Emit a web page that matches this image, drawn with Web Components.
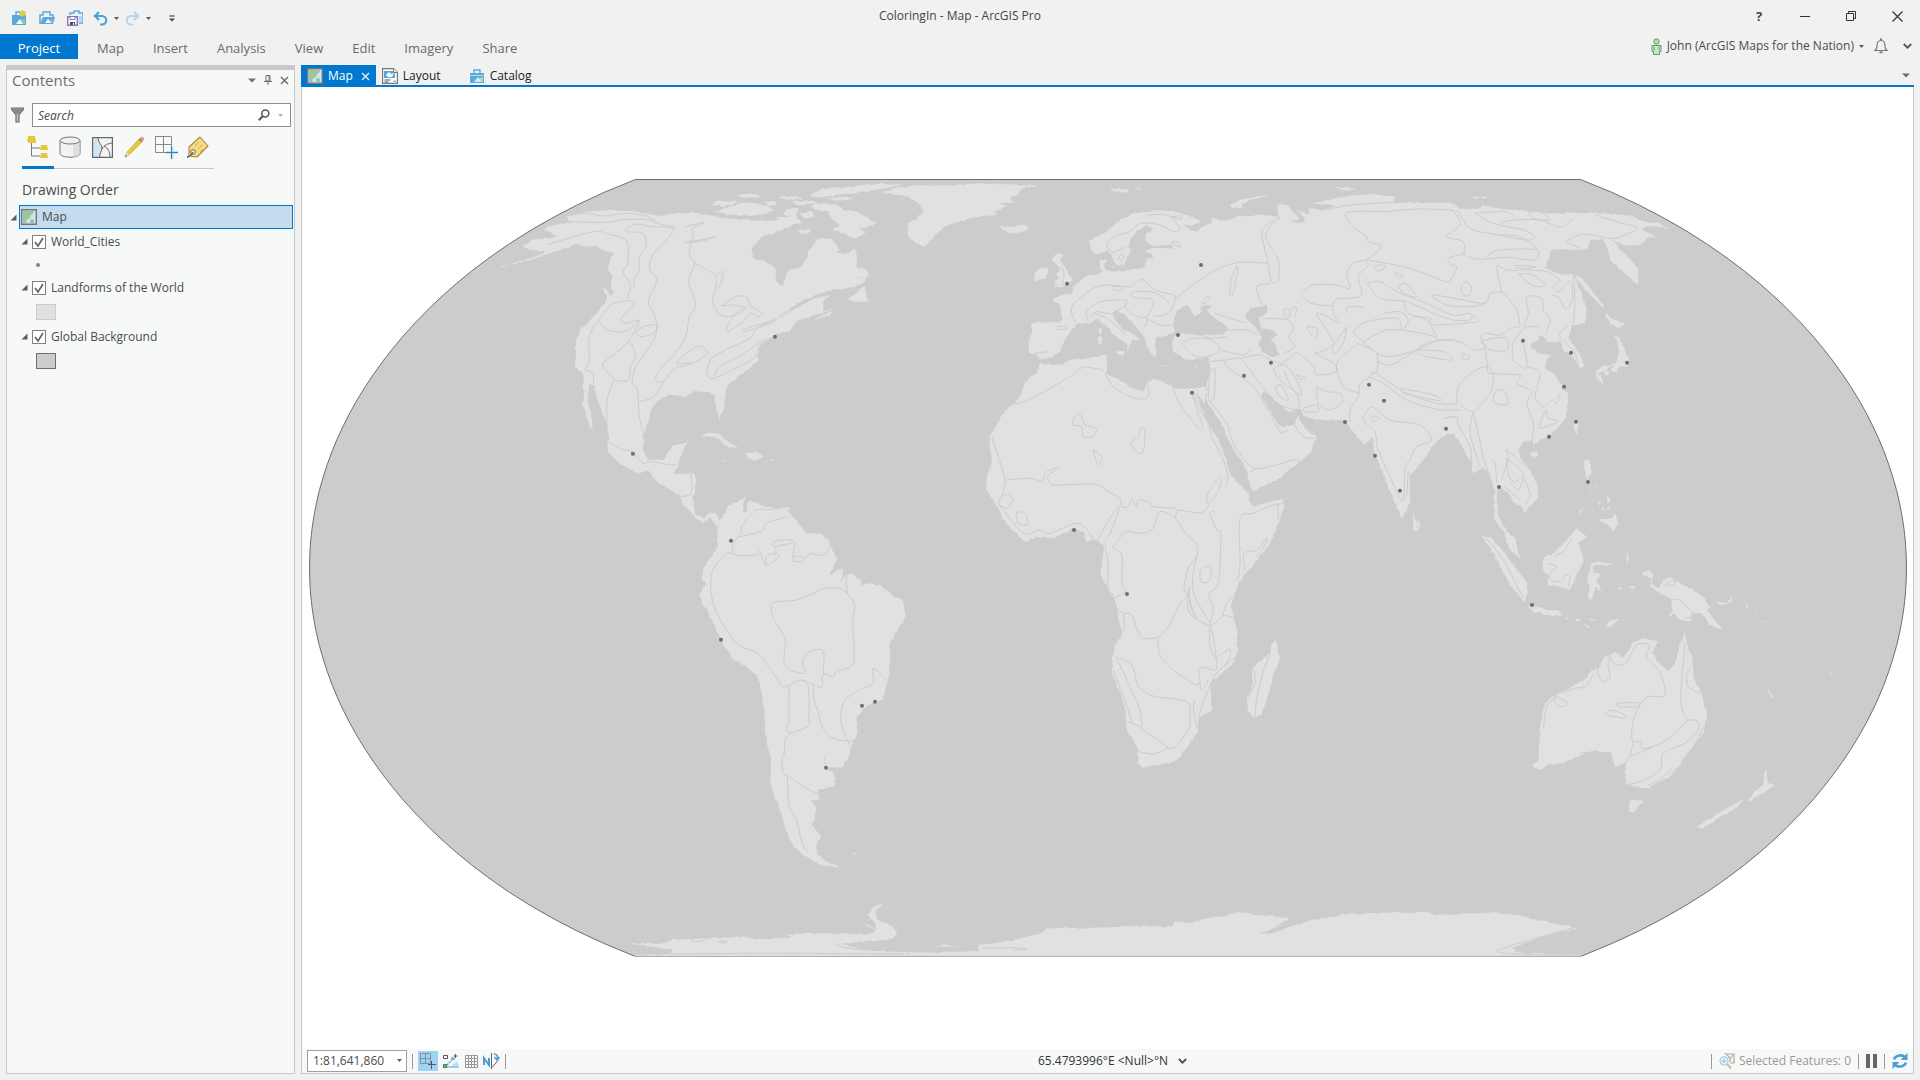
<!DOCTYPE html>
<html lang="en">
<head>
<meta charset="utf-8">
<title>ColoringIn - Map - ArcGIS Pro</title>
<style>
html,body{margin:0;height:100%}
body{font:12px/16px "Open Sans","Noto Sans",sans-serif;color:#4c4c4c;background:#f1f1f1;overflow:hidden}
</style>
</head>
<body>
<app-window>
  <title-bar slot="title"></title-bar>
  <ribbon-bar slot="ribbon"></ribbon-bar>
  <contents-pane slot="side">
    <layer-item name="World_Cities" symbol="point"></layer-item>
    <layer-item name="Landforms of the World" symbol="land"></layer-item>
    <layer-item name="Global Background" symbol="ocean"></layer-item>
  </contents-pane>
  <map-view slot="main"></map-view>
</app-window>
<script>
const FOLDER='<path d="M1 5h14v10H1z" fill="#5aa9dd"/><path d="M5 5V2h6v3" fill="none" stroke="#5aa9dd" stroke-width="1.4"/>';
const ICONS={
 newp:[16,16,FOLDER+'<path d="M5 14l4-5 4 5z" fill="#fff"/><path d="M9 10l5-1v5h-2z" fill="#9cc79a"/><circle cx="11.500" cy="3.500" r="3" fill="#e8cf55"/><circle cx="11.500" cy="3.500" r="1.200" fill="#fff6c8"/><path d="M11.500 0v7M8 3.500h7M9 1l5 5M14 1l-5 5" stroke="#d9bb3a" stroke-width=".7"/>'],
 open:[16,16,'<path d="M1 14V5h3V2h7v3h3v3" fill="none" stroke="#5aa9dd" stroke-width="1.500"/><path d="M1 14L4 7h12l-2 7z" fill="#5aa9dd"/><path d="M6 13l3-4 2 2 2-1-1 3z" fill="#fff"/><path d="M10 11l4-2-1 4z" fill="#9cc79a"/>'],
 save:[16,16,'<path d="M3 5V3h4V1h5v2h4v10h-4" fill="none" stroke="#5aa9dd" stroke-width="1.400"/><path d="M11 6h4v6h-3z" fill="#b5dbf2"/><path d="M.7 6.700h9.600v8.600H.7z" fill="#fff" stroke="#8d74bb" stroke-width="1.400"/><path d="M3 6.500h5v3H3z" fill="#fff" stroke="#8d74bb"/><path d="M3 12h5v3H3z" fill="#4c4c66"/><path d="M6 13h1v2H6z" fill="#fff"/>'],
 undo:[15,15,'<path d="M6 1L2 5l4 4M2 5h7a4 4 0 0 1 0 8.500H7" fill="none" stroke="#4a9fd8" stroke-width="2.200"/>'],
 redo:[15,15,'<path d="M9 1l4 4-4 4M13 5H6a4 4 0 0 0 0 8.500h2" fill="none" stroke="#b3d5ec" stroke-width="2.200"/>'],
 caret:[5,5,'<path d="M0 1h5L2.500 4z" fill="#5c5c5c"/>'],
 caretL:[5,5,'<path d="M0 1h5L2.500 4z" fill="#b5b5b5"/>'],
 caretB:[8,5,'<path d="M0 .5h8L4 4.500z" fill="#6e6e6e"/>'],
 more:[6,7,'<path d="M.5 1h5" stroke="#444" stroke-width="1.200"/><path d="M0 3.500h6L3 6.500z" fill="#444"/>'],
 min:[10,10,'<path d="M0 5.500h10" stroke="#333"/>'],
 restore:[10,10,'<path d="M.5 2.500h7v7h-7zM2.500 2.500v-2h7v7h-2" fill="none" stroke="#333"/>'],
 close:[11,11,'<path d="M.5.5l10 10M10.500.5l-10 10" stroke="#333" stroke-width="1.200"/>'],
 x:[9,9,'<path d="M1 1l7 7M8 1L1 8" stroke="#6e6e6e" stroke-width="1.500"/>'],
 xw:[9,9,'<path d="M1 1l7 7M8 1L1 8" stroke="#e6f2fb" stroke-width="1.300"/>'],
 pin:[8,10,'<path d="M2 .5h4V6H2zM0 6.500h8M4 6.500V10M5 1v5" fill="none" stroke="#6e6e6e"/>'],
 person:[11,17,'<circle cx="5.500" cy="3.500" r="2.700" fill="#b5e0b5" stroke="#5c9f62"/><path d="M1 7.500h9v6H8.500v3h-6v-3H1z" fill="#c8e9c8" stroke="#5c9f62"/><path d="M3 8.500v4M8 8.500v4" stroke="#5c9f62"/>'],
 bell:[14,16,'<path d="M1 12.500c1.500-1 2-2 2-4.500 0-3.500 1-5.500 4-5.500s4 2 4 5.500c0 2.500.5 3.500 2 4.500z" fill="none" stroke="#777" stroke-width="1.200"/><path d="M6 .5h2v2H6zM5.500 13.500h3v1.800h-3z" fill="#777"/>'],
 chev:[9,6,'<path d="M.8 1l3.700 3.700L8.200 1" fill="none" stroke="#555" stroke-width="1.900"/>'],
 map:[16,16,'<path d="M.7.7h14.600v14.600H.7z" fill="#cde6f6" stroke="#777" stroke-width="1.400"/><path d="M2 2h11l-1 3-2 1-1 3-2 1-2 2 1 2H2z" fill="#9cc79a"/><path d="M9 11l2-1 2 1v3H9z" fill="#9cc79a"/>'],
 layout:[16,16,'<path d="M.6.6h11l3.800 3.800v11H.6z" fill="#fff" stroke="#777" stroke-width="1.200"/><path d="M2 3h11v7H2z" fill="#5aa9dd"/><path d="M4 7l3-3 2 2 3-1-2 4H6z" fill="#fff"/><path d="M11.500.6v3.800h3.900" fill="#fff" stroke="#777"/><path d="M2.500 12h6M2.500 14h4" stroke="#555"/><path d="M11 14l2-2 1 2z" fill="#5aa9dd"/>'],
 catalog:[16,16,FOLDER+'<path d="M1 7.500h14" stroke="#b5dbf2"/><path d="M5 14l4-5 5 5z" fill="#d5ebf8"/><path d="M10 10l4-1v5h-2z" fill="#b7d8a4"/>'],
 funnel:[13,16,'<path d="M.7 1h11.600v1.500L8 7.500V15H5V7.500L.7 2.500z" fill="#c8c8c8" stroke="#666" stroke-width="1.200"/><path d="M1 1.500h11L7.500 7h-2z" fill="#888"/>'],
 search:[12,12,'<circle cx="7.300" cy="4.600" r="3.500" fill="none" stroke="#555" stroke-width="1.500"/><path d="M4.700 7.200L.8 11.200" stroke="#555" stroke-width="2"/>'],
 tree:[22,22,'<path d="M4.500 7v13H13M4.500 12H13" fill="none" stroke="#777"/><path d="M1 0h7l1 5H0zM1 5h8v2H1zM14 9h6l1 5h-8zM14 17h6l1 5h-8z" fill="#e2c93f"/>'],
 cyl:[22,22,'<path d="M1 4.500v13c0 2 4.500 3.700 10 3.700s10-1.700 10-3.700v-13" fill="#f2f2f2" stroke="#777"/><path d="M14 8v12.500c4 0 6.500-1.500 6.500-3V5z" fill="#dedede"/><ellipse cx="11" cy="4.500" rx="10" ry="3.500" fill="#f0f0f0" stroke="#777"/>'],
 sel:[21,21,'<path d="M.6.6h19.800v19.800H.6z" fill="#f4f4f4"/><path d="M1 1h5c0 5 4 6 4 10s-3 5-2 9.500H1z" fill="#cfe6f7"/><path d="M.6.6h19.800v19.800H.6z" fill="none" stroke="#666" stroke-width="1.200"/><path d="M6 1c0 5 4 6 4 10s-3 5-2 9.500M10 12c2-4 6-5.500 10.500-6M12 9c4 2 6 6 6 11" fill="none" stroke="#666"/>'],
 pencil:[21,22,'<path d="M1 21l2-5L15 3l3 3L5 19z" fill="#e2c93f" stroke="#b99f28" stroke-width=".6"/><path d="M1 21l2-5 2.500 3z" fill="#efd9a8"/><path d="M15 3l2-2c1-1 4 1 3 3l-2 2z" fill="#e59a86"/><path d="M15 3l3 3" stroke="#888" stroke-width="1.600"/><path d="M1 21l1-2 1 1z" fill="#555"/>'],
 snap:[23,23,'<path d="M.5.5h16v16H.5zM8.500.5v16M.5 8.500h16" fill="none" stroke="#888"/><path d="M17 11v12M11 16.500h12" stroke="#bfe0f5" stroke-width="3"/><path d="M16.500 11v12M11 16.500h12" stroke="#3d7ea8"/>'],
 tag:[22,22,'<path d="M2 11L13 1l8 9L10 21l-8-1z" fill="#f3dc84" stroke="#a8873c" stroke-width="1.100" stroke-linejoin="round"/><path d="M8 10l4-4M11 13l4-4M13 16l3-3" stroke="#c9a955"/><circle cx="6" cy="16" r="2.300" fill="#fff" stroke="#7a5c3a"/><path d="M0 22c0-2 3-1 4-3l2-3" fill="none" stroke="#555" stroke-width="1.300"/>'],
 tri:[7,7,'<path d="M6.500.5v6h-6z" fill="#5c5c5c"/>'],
 snapS:[16,16,'<path d="M.5.5h10v10H.5zM5.500.5v10M.5 5.500h10" fill="none" stroke="#7894a8"/><path d="M11.500 8v8M8 11.500h8" stroke="#555"/>'],
 dyn:[17,16,'<path d="M.5 2.500h4v3h-4zM12.500 1v4M10.500 3h4" fill="none" stroke="#555"/><path d="M4 12L11 5M8 5h3v3" fill="none" stroke="#4a9fd8" stroke-width="1.400" stroke-dasharray="2 1"/><path d="M8 13h8l-2-5z" fill="#bcdff5"/><path d="M2 14h14" stroke="#4a9fd8"/><path d="M.5 11.500h3v3h-3z" fill="#7bb886" stroke="#3f7f4a"/>'],
 grid:[13,13,'<path d="M.5.5h12v12H.5zM3.500.5v12M6.500.5v12M9.500.5v12M.5 3.500h12M.5 6.500h12M.5 9.500h12" fill="none" stroke="#999"/>'],
 north:[17,16,'<path d="M1 12V5l5 7V5" fill="none" stroke="#4a9fd8" stroke-width="2"/><path d="M8.500 0v16M9 14.500l6-7" stroke="#666"/><path d="M11 1c3 0 4 2 3 5M11.500 4l2.500 3 2.500-3" fill="none" stroke="#4a9fd8" stroke-width="1.600"/>'],
 zoomsel:[16,16,'<path d="M5 1h10v9h-4M8 2l3 3v4M14 2l-3 4" fill="none" stroke="#aaa" stroke-width="1.200"/><circle cx="5" cy="8" r="4" fill="#e8f3fa" stroke="#a9cfe8" stroke-width="1.300"/><path d="M5 6v4M3 8h4" stroke="#8fbfe0"/><path d="M8 11l4 4.500" stroke="#e0b890" stroke-width="2.200"/>'],
 pause:[11,14,'<path d="M0 0h4v14H0zM7 0h4v14H7z" fill="#666"/>'],
 refresh:[16,16,'<path d="M2 6.500C3 3 9 .8 13 4M14 9.500C13 13 7 15.200 3 12" fill="none" stroke="#4a9fd8" stroke-width="2.600"/><path d="M15.500 0v7h-7zM.5 16V9h7z" fill="#4a9fd8"/>']
};
const css=(s)=>`<style>:host{box-sizing:border-box}*,*::before{box-sizing:border-box}button{all:unset;box-sizing:border-box;cursor:default;display:inline-flex;align-items:center}${s}</style>`;
const define=(tag,html,setup)=>customElements.define(tag,class extends HTMLElement{
  constructor(){super();this.attachShadow({mode:'open'});}
  connectedCallback(){this.shadowRoot.innerHTML=typeof html==='function'?html(this):html;if(setup)setup(this);}
});

define('ui-icon',el=>{const [w,h,b]=ICONS[el.getAttribute('name')];
  return css(':host{display:inline-flex;flex:none}svg{display:block}')+`<svg width="${w}" height="${h}" viewBox="0 0 ${w} ${h}" aria-hidden="true">${b}</svg>`;});

define('app-window',css(`
:host{display:grid;grid-template-rows:34px 26px minmax(0,1fr);height:100vh;width:100%}
.work{display:flex;gap:6px;padding:5px 6px 6px;min-height:0}
slot[name=main]::slotted(*){flex:1;min-width:0}`)+
`<slot name="title"></slot><slot name="ribbon"></slot><div class="work"><slot name="side"></slot><slot name="main"></slot></div>`);

define('title-bar',css(`
:host{display:grid;grid-template-columns:1fr auto 1fr;align-items:center;padding-bottom:2px}
.quick{display:flex;align-items:center;gap:12px;padding:4px 0 0 11px}
.quick .split{display:flex;gap:6px;margin-left:-2px}
.quick .split+.split{margin-left:-6px}
.quick .last{margin-left:6px}
h1{margin:0;font:12px/16px "Open Sans",sans-serif;color:#444}
.win{display:flex;justify-content:flex-end}
.win button{width:46px;height:28px;justify-content:center;font-weight:700;font-size:13px;color:#444}`)+
`<div class="quick"><button aria-label="New project"><ui-icon name="newp"></ui-icon></button><button aria-label="Open project"><ui-icon name="open"></ui-icon></button><button aria-label="Save project"><ui-icon name="save"></ui-icon></button>
<button class="split" aria-label="Undo"><ui-icon name="undo"></ui-icon><ui-icon name="caret"></ui-icon></button><button class="split" aria-label="Redo"><ui-icon name="redo"></ui-icon><ui-icon name="caret"></ui-icon></button>
<button class="last" aria-label="Customize"><ui-icon name="more"></ui-icon></button></div>
<h1>ColoringIn - Map - ArcGIS Pro</h1>
<div class="win"><button>?</button><button aria-label="Minimize"><ui-icon name="min"></ui-icon></button><button aria-label="Restore"><ui-icon name="restore"></ui-icon></button><button aria-label="Close"><ui-icon name="close"></ui-icon></button></div>`);

define('ribbon-bar',css(`
:host{display:flex;align-items:stretch;justify-content:space-between}
nav{display:flex;height:25px;padding-right:8px}
nav button{padding:2px 14px 0 15px;font-size:13px;color:#6a6a6a}
nav .on{background:#0078d0;color:#fff;width:78px;justify-content:center;padding:2px 0 0;margin-right:4px}
.user{display:flex;align-items:center;gap:12px;padding:0 8px 2px 0}
.user button{gap:5px}
.user .name{margin-right:-2px}
.user .chev{margin-left:3px}`)+
`<nav><button class="on">Project</button><button>Map</button><button>Insert</button><button>Analysis</button><button>View</button><button>Edit</button><button>Imagery</button><button>Share</button></nav>
<div class="user"><button class="name"><ui-icon name="person"></ui-icon><span>John (ArcGIS Maps for the Nation)</span><ui-icon name="caret"></ui-icon></button><button aria-label="Notifications"><ui-icon name="bell"></ui-icon></button><button class="chev" aria-label="Collapse ribbon"><ui-icon name="chev"></ui-icon></button></div>`);

define('contents-pane',css(`
:host{display:flex;flex-direction:column;width:289px;flex:none;background:#f7f9f8;border:1px solid #c8c8c8;border-top:5px solid #c8c8c8}
header{display:flex;align-items:center;height:20px;padding:0 5px;gap:8px}
h2{margin:0;flex:1;font:15px/20px "Open Sans",sans-serif;color:#6e6e6e}
.find{display:flex;align-items:center;gap:8px;padding:13px 3px 0 4px}
.box{display:flex;flex:1;height:24px;border:1px solid #8e8e8e;background:#fff;align-items:center;padding:0 7px 0 5px;gap:8px}
input{border:0;outline:0;padding:1px 0 0;margin:0;flex:1;min-width:0;font:italic 12px/16px "Open Sans",sans-serif;background:none;color:#4c4c4c}
input::placeholder{color:#4c4c4c;opacity:1}
.tools{display:flex;width:192px;margin:7px 0 0 15px;border-bottom:1px solid #c8c8c8;height:35px}
.tools button{width:32px;height:35px;justify-content:center;border-bottom:3px solid transparent;padding-bottom:6px}
.tools .on{border-bottom-color:#0078d0}
h3{margin:12px 0 6px 15px;font:500 14px/18px "Open Sans",sans-serif;color:#4c4c4c}
.root{display:flex;align-items:center;gap:2px;padding:0 1px 0 3px}
.root div{display:flex;flex:1;align-items:center;gap:5px;height:24px;background:#c5dbef;border:1px solid #0078c8;padding-left:1px}`)+
`<header><h2>Contents</h2><button aria-label="Options"><ui-icon name="caretB"></ui-icon></button><button aria-label="Pin"><ui-icon name="pin"></ui-icon></button><button aria-label="Close"><ui-icon name="x"></ui-icon></button></header>
<div class="find"><ui-icon name="funnel"></ui-icon><div class="box"><input type="text" placeholder="Search" aria-label="Search"><ui-icon name="search"></ui-icon><ui-icon name="caretL"></ui-icon></div></div>
<div class="tools"><button class="on" aria-label="Drawing order"><ui-icon name="tree"></ui-icon></button><button aria-label="Data source"><ui-icon name="cyl"></ui-icon></button><button aria-label="Selection"><ui-icon name="sel"></ui-icon></button><button aria-label="Editing"><ui-icon name="pencil"></ui-icon></button><button aria-label="Snapping"><ui-icon name="snap"></ui-icon></button><button aria-label="Labeling"><ui-icon name="tag"></ui-icon></button></div>
<h3>Drawing Order</h3><div class="root"><ui-icon name="tri"></ui-icon><div><ui-icon name="map"></ui-icon><span>Map</span></div></div><slot></slot>`);

define('layer-item',el=>{const s=el.getAttribute('symbol');return css(`
:host{display:block;padding-left:14px}
.row{display:flex;align-items:center;height:25px;gap:4px}
label{display:flex;align-items:center;gap:5px}
input{appearance:none;margin:0;width:14px;height:14px;border:1px solid #808080;background:#fff url("data:image/svg+xml,%3Csvg xmlns='http://www.w3.org/2000/svg' viewBox='0 0 12 12'%3E%3Cpath d='M2 6l3 4 5-8' fill='none' stroke='%23666' stroke-width='1.700'/%3E%3C/svg%3E")}
.sym{display:flex;align-items:center;height:24px;padding-left:15px}
.point{height:21px}
i{display:block;width:20px;height:16px;border:1px solid #ccc;background:#e1e1e1}
.ocean i{background:#ccc;border-color:#6e6e6e}
.point i{width:4px;height:4px;border:0;border-radius:2px;background:#828282}`)+
`<div class="row"><ui-icon name="tri"></ui-icon><label><input type="checkbox" checked><span>${el.getAttribute('name')}</span></label></div><div class="sym ${s}"><i></i></div>`;});

define('map-view',css(`
:host{display:flex;flex-direction:column}
.tabs{display:flex;height:22px;border-bottom:2px solid #0078d0;align-items:stretch;color:#222}
.tabs button{gap:5px;padding:2px 14px 0 6px;margin-right:8px}
.tabs .on{background:#0078d0;color:#fff;padding:2px 6px 0;margin:0}
.tabs .on ui-icon+span+ui-icon{margin-left:3px}
.tabs .end{margin:0 4px 0 auto;padding:0}
.frame{flex:1;min-height:0;display:flex;flex-direction:column;border:1px solid #c8c8c8;border-top:0;background:#fff}
world-map{flex:1;min-height:0}`)+
`<div class="tabs"><button class="on"><ui-icon name="map"></ui-icon><span>Map</span><ui-icon name="xw"></ui-icon></button><button><ui-icon name="layout"></ui-icon><span>Layout</span></button><button><ui-icon name="catalog"></ui-icon><span>Catalog</span></button><button class="end" aria-label="All views"><ui-icon name="caretB"></ui-icon></button></div>
<div class="frame"><world-map></world-map><status-bar></status-bar></div>`);

define('status-bar',css(`
:host{display:grid;grid-template-columns:1fr auto 1fr;align-items:center;height:24px;background:#f7f9f8;padding:0 5px}
div{display:flex;align-items:center}
.l{gap:5px}.pick{position:relative;display:flex}
select{appearance:none;width:100px;height:22px;border:1px solid #a0a0a0;border-radius:0;background:#fff;font:12px/16px "Open Sans",sans-serif;color:#4c4c4c;padding:0 16px 0 5px}
.pick ui-icon{position:absolute;right:5px;top:8px;pointer-events:none}
hr{margin:0;width:1px;height:15px;border:0;background:#999}
.snap{background:#a0d3f3;width:20px;height:20px;justify-content:center}
.c{gap:10px;color:#333;padding-left:10px}
.r{justify-content:flex-end;gap:7px;color:#999}
.r button{gap:4px}`)+
`<div class="l"><span class="pick"><select aria-label="Map scale"><option>1:81,641,860</option></select><ui-icon name="caret"></ui-icon></span><hr><button class="snap" aria-label="Snapping"><ui-icon name="snapS"></ui-icon></button><button aria-label="Dynamic constraints"><ui-icon name="dyn"></ui-icon></button><button aria-label="Grid"><ui-icon name="grid"></ui-icon></button><button aria-label="North"><ui-icon name="north"></ui-icon></button><hr></div>
<button class="c"><span>65.4793996°E &lt;Null&gt;°N</span><ui-icon name="chev"></ui-icon></button>
<div class="r"><hr><button><ui-icon name="zoomsel"></ui-icon><span>Selected Features: 0</span></button><hr><button aria-label="Pause drawing"><ui-icon name="pause"></ui-icon></button><hr><button aria-label="Refresh"><ui-icon name="refresh"></ui-icon></button></div>`);

/* Each sheet holds digitised rings and boundary lines in its own units: x,y origin and units per map unit. */
const SHEETS=[
{x:500,y:170,sx:2.8,sy:3,land:[
'0,292 50,275 110,256 125,245 80,240 65,228 90,208 145,203 165,200 120,178 150,165 205,158 190,150 185,138 240,126 310,119 380,125 440,138 480,132 540,125 565,135 610,140 650,147 700,150 760,152 800,148 830,158 800,175 770,188 730,205 705,235 708,265 740,272 770,292 775,335 790,348 800,320 810,298 845,290 862,258 862,245 880,220 890,205 930,207 950,240 940,250 970,250 995,232 1000,265 998,290 1025,300 1032,318 1000,325 1028,325 1015,340 990,352 930,360 890,372 850,390 780,435 830,412 880,385 918,375 922,380 905,395 905,420 930,418 900,432 880,435 830,455 810,485 770,493 750,510 735,520 725,540 720,575 690,600 650,635 632,655 628,710 615,750 605,720 602,675 580,665 540,665 520,680 470,675 440,695 425,715 420,745 402,785 400,830 412,870 460,870 485,825 525,818 510,850 500,880 487,912 545,912 548,940 540,985 546,1030 569,1045 588,1027 607,1035 618,1055 606,1070 588,1040 569,1060 546,1043 513,1005 504,978 448,942 415,902 390,912 340,885 305,850 300,820 305,800 295,745 275,700 265,645 250,640 245,690 255,740 262,785 248,765 240,725 228,705 235,680 232,610 210,590 213,510 225,480 270,430 290,405 300,380 318,372 310,350 315,320 300,290 318,250 290,240 270,228 240,230 215,222 190,235 150,245 90,268',
'870,110 890,100 940,103 960,120 1000,125 1025,140 1055,160 1030,170 1005,175 1025,190 995,205 960,190 930,180 955,165 930,150 920,125 880,118',
'600,125 640,110 690,98 740,105 770,120 750,130 700,138 640,135','585,105 610,92 670,95 630,110','660,75 700,70 730,80 680,82','740,92 775,96 770,108 750,104','780,82 830,78 850,86 800,88','820,95 870,92 890,100 830,105','800,120 835,115 830,140 790,135','840,130 870,122 880,140 850,145','770,140 830,140 850,160 800,165','870,75 900,60 980,50 1060,42 1130,42 1080,55 1020,65 960,72 920,80 880,82','910,86 970,80 990,88 940,92','880,62 940,52 960,56 900,66','830,180 870,178 865,190 840,192',
'1070,70 1100,55 1180,45 1260,46 1350,40 1430,44 1510,47 1460,55 1450,75 1425,85 1440,98 1400,100 1420,110 1380,125 1395,135 1330,142 1280,158 1245,170 1215,200 1190,230 1160,215 1145,200 1140,160 1165,150 1185,120 1165,95 1140,80 1100,72',
'975,390 1005,360 1022,345 1025,370 1032,395 1010,395','878,452 905,434 935,424 925,434 895,445','285,355 300,360 312,390 300,380','560,800 580,788 610,790 640,815 668,835 640,832 610,805 580,798','690,848 720,845 738,860 710,872 692,862','622,870 640,872 630,877','755,870 775,870 765,874'],
lines:['185,138 240,130 290,138 350,130 410,138 440,155','200,155 300,157 350,148 420,150 440,160 490,172','130,225 190,205 270,184 310,195 345,203 358,225 358,280 345,305 365,345 355,385','375,350 375,330 390,300 390,260 410,225 400,190 355,185 355,175 380,163 430,170 485,175 470,205 430,250 418,295 438,325 430,360 415,395 430,430 438,460 435,500 410,545 380,590 370,640 385,660 390,740 400,785','520,170 570,158 540,175 540,200 530,255 545,280 528,335 548,405 530,440 520,500 490,550 440,610 440,635 460,632 490,595 540,580 580,550 560,528 520,552 495,580 540,578','545,280 580,300 605,318 603,355 595,390 612,430 640,440 680,425','605,318 625,305 615,350 603,355','515,215 560,210 605,200 570,212 520,220','620,408 660,380 690,380 700,405 735,430 725,440 700,430 685,450 660,470 635,485 640,460 665,425 690,415 650,405 620,408','675,482 720,465 770,450 760,460 730,470 680,488','590,565 640,535 700,505 720,475 790,438 850,400 900,368','770,500 730,520 710,565 640,605 590,627 580,600 590,565','600,618 615,590 660,565 710,530 740,505','275,455 310,405 355,392 375,398 360,420 340,445 350,460 390,450 350,485 300,480 275,455 250,500 250,570 240,598 260,610 262,640','390,450 380,480 355,520 325,548','360,515 325,548 288,580 300,605 325,630 360,630 365,590 380,560 370,525 360,515','318,630 300,690 300,770','390,695 430,680 460,632','305,815 340,838 370,845 400,880 420,875 480,885 495,880','535,912 535,970 505,980','380,490 400,470 440,465 430,490 395,500 380,490'],
cities:'770,500 372,851'},
{x:660,y:480,sx:3,sy:3,land:[
'175,130 190,105 205,75 235,65 260,45 250,70 250,98 260,95 262,68 275,62 300,75 320,80 350,85 390,82 380,92 395,105 425,140 440,160 480,160 505,180 515,205 532,240 520,265 505,290 530,270 550,268 548,290 540,308 560,280 580,283 602,300 605,318 630,310 665,318 700,350 728,360 735,395 732,425 705,460 690,495 690,550 682,610 668,660 640,668 610,685 590,710 592,760 575,795 562,840 545,863 500,862 520,880 528,895 520,920 475,930 480,960 450,960 470,990 465,1020 455,1035 482,1065 468,1105 475,1125 500,1145 535,1160 490,1158 440,1130 400,1100 375,1040 355,970 345,960 332,905 333,830 320,790 312,700 300,610 290,585 260,560 215,535 200,510 160,430 140,385 125,370 120,340 138,310 125,300 130,265 150,235 172,200 172,145','570,1120 595,1118 580,1123'],
lines:['200,220 175,245 157,275 152,330 165,385 190,435 235,495 290,518 330,565 360,610 378,620 425,600 484,622 488,583 520,590 530,573 572,560 583,530 578,430 584,375 565,345 542,325 492,325 460,340 410,360 338,370 340,415 375,475 372,545 395,572 433,580 428,550 440,520 480,508 492,520 490,575 497,585','200,220 217,220 240,227 290,225 300,213 318,258 355,230 350,220 320,228 318,258','217,220 220,190 245,155 247,135 285,92 330,88 368,85','238,170 305,153 320,128 385,110','345,222 348,205 335,190 370,180 405,185 400,225 430,232 432,245 400,243 400,225','345,200 398,188','435,235 455,220 475,226 500,220 512,190','563,280 558,310 563,340','388,615 386,720 380,740 392,758 442,740 447,715 445,620 425,600','460,620 462,660 476,700 485,738 518,775 580,785','685,605 640,565 640,610 600,628 555,660 542,710 552,760 570,795','392,758 375,780 373,820 365,840 370,880 385,888 430,920 475,942','382,888 388,980 410,1020 425,1085 445,1120','493,830 493,845 500,855'],
cities:'213,182 183,479 606,677 645,665 498,863'},
{x:960,y:170,sx:3,sy:3,land:[
'240,580 275,585 310,583 330,570 380,565 440,555 442,600 435,610 470,625 520,655 548,665 562,640 580,625 610,635 645,655 690,655 740,652 735,702 708,665 725,715 745,760 785,830 800,870 810,910 840,945 870,970 865,990 880,1008 920,998 970,985 972,1010 955,1060 930,1120 880,1185 835,1240 815,1300 820,1340 832,1380 832,1450 815,1485 750,1540 755,1620 715,1645 715,1680 690,1720 665,1755 640,1775 600,1783 550,1793 532,1780 535,1740 500,1675 495,1610 457,1510 457,1460 467,1420 485,1395 475,1340 465,1290 440,1250 420,1210 430,1150 430,1125 410,1110 380,1115 370,1085 340,1075 280,1105 235,1100 195,1115 130,1050 100,990 80,960 78,930 95,880 88,800 120,745 145,710 165,700 185,665 195,635 230,610',
'947,1411 958,1470 945,1500 905,1635 880,1641 863,1625 862,1580 880,1540 877,1500 890,1480 930,1450 932,1430',
'215,458 300,458 307,440 300,405 275,388 300,378 335,370 345,345 375,320 420,310 430,300 418,300 420,270 440,268 432,285 440,300 470,305 500,300 550,295 560,265 580,265 575,250 555,245 575,235 640,235 635,225 580,230 555,210 555,195 580,175 560,165 535,180 510,205 505,230 515,240 500,260 495,285 470,285 455,260 445,240 420,250 400,250 385,215 410,200 440,185 475,155 520,130 600,120 645,125 700,142 725,155 700,165 665,165 690,180 710,185 725,170 755,160 755,145 800,152 830,140 900,135 955,140 950,105 985,105 1000,130 1020,145 990,158 1030,157 1035,145 1010,120 1050,135 1045,115 1090,120 1130,105 1055,100 1130,85 1180,75 1240,72 1310,80 1300,95 1340,98 1430,97 1480,100 1500,118 1560,115 1570,106 1620,115 1700,123 1780,130 1840,128 1900,128 1960,132 2010,137 2060,155 2100,160 2125,175 2070,168 2040,175 2088,200 2060,205 2040,225 2000,228 1960,210 1975,235 2010,265 2035,300 2033,345 1985,300 1950,270 1945,240 1935,220 1925,205 1890,212 1885,235 1870,240 1800,238 1775,240 1755,295 1790,310 1840,315 1860,360 1880,420 1875,460 1835,465 1825,505 1845,530 1875,585 1860,595 1840,560 1810,540 1800,515 1765,515 1750,500 1740,495 1735,510 1710,525 1735,550 1775,555 1760,570 1755,595 1780,610 1810,650 1805,660 1825,670 1820,740 1790,780 1760,800 1725,820 1722,835 1715,810 1690,815 1675,835 1680,860 1710,900 1735,950 1735,980 1715,1005 1690,1035 1685,1010 1665,1000 1640,965 1620,950 1612,960 1610,990 1615,1040 1640,1085 1665,1105 1672,1135 1682,1165 1655,1145 1640,1120 1635,1090 1600,1045 1605,960 1590,920 1570,890 1540,910 1530,870 1500,820 1480,790 1465,790 1440,805 1425,820 1390,870 1370,895 1350,915 1350,1000 1325,1045 1310,1010 1280,940 1245,850 1240,820 1235,800 1215,825 1190,800 1160,760 1150,750 1085,750 1030,738 1022,716 985,725 960,705 930,675 910,665 905,685 930,720 950,755 965,770 1000,765 1016,738 1025,760 1045,785 1070,800 1050,850 1000,890 960,925 880,965 870,945 860,900 810,820 775,745 742,695 740,650 750,600 745,560 715,565 680,570 640,545 635,520 640,500 660,490 720,495 790,495 805,480 790,460 750,435 740,420 760,405 720,410 725,425 705,440 690,415 680,405 650,420 640,455 645,480 635,492 610,500 590,500 585,520 590,545 585,560 570,545 545,490 525,465 490,430 470,420 455,430 465,450 490,480 530,500 542,510 515,510 510,525 503,543 500,520 470,500 440,470 415,445 390,460 355,460 340,475 320,500 310,520 300,545 280,560 240,570 230,555 208,550 205,515 215,490',
'120,165 150,172 190,163 208,173 190,185 150,190 130,180','272,355 285,352 310,350 340,330 325,310 310,285 300,268 310,255 290,250 275,270 290,285 300,300 288,315 300,325 282,335 292,345','220,335 225,310 245,292 265,298 258,325','418,475 425,475 425,490 417,490','415,500 427,500 425,522 415,522','463,543 495,543 488,557','568,540 590,545 588,560 575,552','600,584 625,587 610,589','705,592 720,585 712,595','455,290 462,288 460,298','810,105 850,88 930,73 870,90 845,100 850,115 815,112','450,58 510,56 500,70 470,65','520,56 565,54 540,60','1110,50 1180,55 1190,62 1140,58','1525,80 1590,82 1550,87','1945,115 1965,115 1955,118','1845,315 1865,325 1895,360 1915,385 1935,415 1900,385 1860,340','1935,430 1965,450 1995,462 1975,475 1950,460','1963,495 1980,505 1995,540 2008,570 2005,590 1980,590 1970,605 1950,600 1970,575 1980,545','1905,605 1925,590 1965,580 1940,600 1920,610','1905,610 1925,615 1928,645 1910,625','1933,605 1950,605 1935,618','1840,765 1850,755 1856,765 1850,795','1710,850 1730,843 1735,855 1722,868','1358,1027 1380,1060 1375,1083 1360,1080','1872,868 1890,870 1895,905 1885,925 1892,950 1875,915','1918,1050 1955,1045 1965,1025 1975,1060 1960,1085 1945,1065','1908,990 1920,995 1920,1015','1938,975 1955,990 1945,1000','1925,1005 1935,1020 1928,1022','1940,1015 1950,1010 1945,1022','1890,958 1896,965 1892,972','1906,945 1918,950 1910,952','1852,1040 1878,998 1860,1030','1565,1097 1595,1105 1630,1145 1665,1190 1700,1235 1703,1260 1695,1295 1660,1260 1625,1195 1600,1150','1703,1308 1730,1310 1760,1320 1790,1320 1812,1338 1780,1338 1720,1325','1750,1165 1780,1150 1810,1120 1850,1075 1880,1100 1855,1120 1872,1170 1850,1215 1830,1260 1800,1250 1765,1245 1765,1215 1750,1200','1885,1215 1895,1180 1910,1175 1950,1180 1960,1165 1955,1185 1900,1187 1900,1208 1930,1210 1910,1225 1925,1270 1905,1250 1895,1290 1885,1285 1890,1245 1880,1240','1932,1370 1955,1350 1980,1347 1945,1372','1815,1343 1825,1343 1820,1350','1838,1345 1870,1350 1850,1354','1885,1347 1915,1348 1895,1352','1873,1362 1890,1370 1885,1375','2000,1150 2008,1165 1998,1185','2003,1250 2032,1252 2020,1256','1975,1252 1988,1256 1980,1260','2045,1210 2065,1200 2080,1215 2075,1240 2095,1255 2110,1230 2130,1222 2160,1240 2200,1260 2230,1280 2240,1300 2255,1310 2240,1320 2265,1350 2285,1380 2250,1365 2225,1330 2195,1330 2195,1352 2160,1350 2140,1330 2125,1340 2138,1320 2135,1290 2100,1270 2070,1250 2075,1225','2270,1298 2300,1298 2320,1275 2312,1298 2290,1305'],
water:['855,440 870,415 920,405 920,430 895,445 905,475 935,480 955,498 932,505 945,525 960,557 930,560 905,545 895,520 905,500 880,465'],
lines:['160,703 200,692 270,655 330,620 370,592 430,600','435,610 460,650 510,680 550,687 568,670 562,640','95,800 115,860 135,930 127,975 115,1000 140,1015 160,990 145,975 127,975','115,1000 130,1020 190,1090 240,1080 270,1090 345,1060 375,1072 400,1110','135,930 210,925 245,932 260,905 300,892 265,915 265,930 285,945 405,942 445,965 480,985 485,1010 505,1010 515,990 530,1010 535,990 570,998 580,1010 640,1015 655,1020 720,1028 745,1010 740,980 770,930 785,925 775,965 750,1000','477,1005 440,1060 415,1108','480,1010 455,1080 432,1120','168,1030 185,1025 200,1040 202,1065 175,1060 168,1030','340,745 360,732 375,765 408,775 400,800 370,800 365,770 340,765 340,745','540,775 555,780 550,845 530,845 512,820 535,800 540,775','400,840 425,860 415,885 405,860 400,840','640,655 655,695 680,730 715,775 728,770 715,730 695,670','700,665 715,710 745,760 755,800 790,870 803,920 798,950','458,1135 495,1085 530,1090 575,1080 600,1025 645,1045 680,1095 708,1120 712,1155 685,1195 672,1255 682,1275 655,1310 625,1370 593,1402 543,1400 515,1335 490,1330 470,1315','490,1330 493,1370 485,1390','458,1135 485,1155 487,1240 497,1265 460,1285','435,1125 445,1190 443,1255 460,1275','593,1402 600,1455 640,1500 705,1543 720,1535 715,1500 730,1492 768,1500 768,1465','645,1045 652,1020','712,1155 698,1220 705,1280 750,1360','682,1275 685,1320 705,1345 750,1365 785,1340 800,1300 820,1280','688,1250 692,1300 710,1345 695,1320 685,1270 688,1250','750,1365 750,1430 768,1465 760,1400 750,1365','765,1025 750,1030 770,1080 782,1095 775,1240 747,1270 760,1320 750,1360','832,1235 840,1180 840,1045 880,1030 925,1010 970,1000','955,1000 955,1050','855,1200 852,1150 890,1140 920,1105 915,1125 890,1160','720,1200 740,1188 755,1200 745,1235 722,1235 720,1200','788,1335 818,1342','768,1465 810,1437 808,1465 795,1488','720,1535 725,1560 745,1530','715,1640 745,1560 770,1510 832,1455','467,1460 510,1480 525,1510 535,1550 580,1578 680,1595 690,1640 685,1680 645,1730 625,1733 590,1705 570,1695 540,1670 500,1655','470,1465 510,1550 540,1620 545,1670','460,1500 490,1580 520,1665','530,1743 580,1752 625,1733','705,1590 700,1620 712,1675','930,1450 905,1520 890,1590 885,1640','882,1500 885,1540 865,1585',
'455,245 440,225 460,200 510,185 540,160 600,165 640,185 660,180 650,160 620,135 560,135','455,250 500,230','303,290 312,310 308,345','475,265 485,252 492,260 485,272 475,265','635,215 655,218 660,230 640,225 635,215','635,140 665,138 660,148 635,140','345,455 335,410 390,360 440,345 510,350 545,328 585,360 640,375 645,390 625,430 580,440','455,350 485,348 485,362 460,360 455,350','385,455 380,425 420,395 500,390 495,410 520,435 560,440 580,390 540,385 515,380 520,365 570,365 600,375 628,400','400,430 440,445 500,495','390,440 410,425 460,430 500,400','560,440 560,460 545,480','560,445 600,465 640,465','645,385 750,310 830,278 925,280','830,288 815,325 810,370 820,370 833,300 830,288','725,400 745,378 750,385 735,400 725,400','925,280 905,190 920,165 960,140','960,145 925,175 920,210 955,270 955,330 935,335 925,280','930,340 890,350 905,405','1300,125 1160,127 1180,170 1220,200 1225,215 1265,230 1220,270 1225,285 1195,320 1205,375 1165,385 1125,390 1120,430 1140,460','1300,122 1380,117 1480,120','1095,120 1170,105 1270,98 1340,97','1225,268 1180,280 1160,310 1170,355 1130,345 1060,345 1025,370 1055,400 1115,408','1225,270 1320,288 1380,305 1460,335 1480,315 1490,290 1475,285 1465,265 1515,250','1240,290 1260,285 1278,290 1255,303 1240,290','1305,308 1330,315 1315,322 1305,308','1220,340 1260,335 1320,370 1400,400 1480,435 1530,430 1530,450 1480,450 1420,430 1340,395 1260,385 1220,340','1315,350 1335,340 1370,380 1330,370 1315,350','1210,515 1180,485 1220,455 1310,445 1325,480','1270,430 1320,425 1345,450 1330,480','1330,390 1345,430 1400,450 1430,500','1360,440 1410,445 1418,465 1550,455 1535,435','1210,515 1280,480 1360,485 1430,505 1370,540 1280,560 1230,535 1210,515','1430,508 1500,515 1545,540 1580,530 1565,515 1600,505 1640,505 1640,540 1590,540 1565,515 1570,490 1620,495 1650,475 1680,470','1190,520 1250,550 1250,610','1250,575 1290,585 1340,560 1400,520 1480,508','1375,540 1450,545 1475,570 1400,560 1375,550 1375,540','1505,550 1525,555 1528,568 1510,565 1505,550','1230,612 1250,612 1340,670 1430,700 1490,702','1225,620 1270,640 1340,690 1430,718 1500,720','1320,655 1420,675 1440,692 1340,672 1320,655','1490,702 1495,650 1540,605 1583,590 1600,620 1590,670 1540,725 1500,702','1575,530 1583,590 1590,610 1680,615 1670,640 1715,665 1700,700 1720,760 1715,820','1605,665 1630,660 1645,700 1625,705 1600,695 1605,665','1680,468 1670,420 1630,370 1590,370 1575,400 1500,388 1415,375 1460,405 1530,410 1575,400','1625,365 1610,288 1640,300 1700,300 1760,305 1800,330 1780,350 1795,365 1830,335 1838,380 1825,415 1810,410 1800,385 1775,375','1840,320 1845,400 1840,460','1675,312 1720,315 1755,345 1720,348 1675,312','1665,286 1725,290 1700,296 1665,292','1480,120 1500,165 1460,200 1510,215 1515,255 1560,268 1640,262 1720,270 1733,240 1650,238 1600,245 1580,262','1490,120 1530,175 1600,192 1680,200 1733,235','1545,130 1600,160 1690,180 1725,200 1700,210 1600,192','1620,158 1660,150 1740,150 1800,172 1840,145','1550,128 1640,125 1665,145','1705,125 1740,125 1770,150 1720,145 1705,125','1815,215 1870,192 1960,205 2030,175 1970,155 1900,133','1815,215 1870,238','1950,205 1975,225','1505,345 1520,335 1535,355 1525,378 1505,370 1505,345','1690,470 1705,430 1700,380 1745,385 1750,420 1770,450 1755,495','1690,470 1740,470','1690,475 1660,520 1660,570 1695,595 1700,570 1690,520','1700,590 1740,610 1725,680 1750,710 1775,690 1790,700 1800,670','1805,530 1800,490 1825,468','1810,510 1845,550 1855,590','1740,760 1758,722 1765,745 1795,755 1740,775 1740,760','1540,725 1530,790 1560,890','1490,740 1450,745 1490,740 1495,765 1530,830 1535,890','1540,725 1555,790 1570,860 1590,920','1640,865 1690,910 1665,935 1645,915 1640,865','1710,900 1640,840 1645,865 1625,930','1690,920 1710,970 1700,1000','1650,935 1675,960 1690,925','1635,950 1680,990','1590,870 1605,880 1610,940','1240,610 1225,625 1200,640 1195,680 1170,720 1170,755','1250,825 1245,785 1210,750 1235,710 1290,750 1380,765 1415,810 1370,830 1350,870 1335,895 1330,990 1310,965 1250,830','1230,745 1245,738 1258,748 1240,755 1230,745','1345,905 1340,980','1362,1040 1373,1060 1370,1075','800,570 840,565 870,600 900,640 950,700 1010,720','800,570 800,590 880,650 930,730 960,785 985,780','750,600 765,600 765,650 760,690 745,680 750,600','745,690 800,760 820,820 885,895 1000,870 1020,880','870,905 890,895','1000,760 1030,800 1065,805','750,575 800,570','945,650 965,645 985,690 960,680 945,650','1020,715 1010,670 970,640 940,600 975,585 1010,630 1025,675 1000,660 970,600','840,565 900,555 960,580 1010,545','1070,650 1100,665 1140,670 1145,700 1105,720 1075,700 1070,650','1030,715 1070,705 1075,725 1035,725 1030,715','1010,545 1060,590 1070,615 1130,605 1120,580 1065,550','1195,520 1130,580 1150,650 1195,668','1010,615 1035,622 1020,628 1010,615','1040,470 1070,475 1070,505 1055,495 1040,470','1065,550 1120,520 1070,430 1140,460','1160,470 1150,520 1125,550 1120,530 1160,470','905,445 985,450 1000,480 985,500 1005,530 970,550','970,420 985,415 990,440 975,440 970,420','990,420 1010,412 1005,440','665,520 700,505 755,510 780,540 740,560 700,555 665,520','720,495 755,505 800,500','765,430 810,445 860,460','805,480 860,480 895,495','780,540 850,555 870,540','1210,412 1165,410 1160,430','290,470 320,468 318,478 290,478','225,550 265,545','1575,1100 1630,1170 1690,1285','1785,1155 1810,1145 1835,1105','1760,1180 1790,1190 1770,1210 1772,1230 1805,1235 1815,1215 1830,1220 1825,1250','2135,1290 2160,1290 2200,1335 2170,1345','2115,1245 2145,1230 2140,1245 2115,1245'],
cities:'321,341 723,285 654,495 696,668 852,617 933,578 1155,756 1227,644 1272,692 1245,857 1320,962 1458,776 1689,512 1833,548 2001,578 1812,650 1848,755 1767,800 1617,951 1884,936 1716,1305 342,1080 501,1272'},
{x:1360,y:440,sx:3,sy:3,land:[
'516,975 535,960 540,900 542,850 555,790 575,770 620,750 680,715 695,690 715,685 735,650 765,635 790,655 800,640 820,605 850,595 895,605 875,640 900,670 925,695 945,670 960,610 975,580 985,625 997,650 1000,710 1025,760 1042,820 1030,880 980,945 930,1010 860,1045 800,1035 795,1000 800,965 765,980 755,940 700,932 650,950 610,970 560,975 545,988 525,985','805,1115 812,1080 850,1082 820,1118','1010,1160 1060,1130 1100,1105 1150,1080 1120,1110 1080,1130 1030,1165','1165,1085 1180,1060 1210,1035 1215,990 1222,1000 1225,1030 1245,1035 1210,1060','1222,745 1242,775 1230,765','1407,700 1420,695 1415,705','1430,680 1447,675 1440,681','1155,487 1165,505 1158,500','1205,540 1230,545 1210,545','820,590 832,590 825,594','1180,515 1190,525 1184,522'],
lines:['550,865 560,800 580,775 600,752 610,760 640,745 675,740 700,705','745,645 745,680 750,710 730,725 713,700 715,685','750,650 760,670 795,672 830,615 868,615 860,655 900,695 915,765 865,770 840,795 820,840 815,885 820,905 845,905 840,920 860,925 920,900 980,845 1010,842 1015,870 975,910 910,940 900,990 850,1020 800,1035','975,610 968,690 962,770 967,810 980,838','995,680 980,700 985,740 1020,760','585,770 600,775 622,788 605,800 585,785 585,770','770,790 830,788 832,800 780,800 770,790','735,822 755,810 795,825 795,835 735,825','820,900 810,945 785,985','880,920 835,940 810,950','1030,860 1000,920 975,945','935,985 900,1020 865,1035','660,940 700,935','980,640 990,650'],cities:''},
{x:600,y:880,sx:1.452,sy:3,land:[
'50,227 100,222 105,210 90,205 40,190 95,190 105,178 150,175 210,170 225,178 280,172 270,162 330,160 390,163 400,152 375,122 402,148 398,125 388,105 395,85 413,67 400,95 403,120 425,140 432,160 425,175 400,183 350,190 380,208 420,215 480,218 550,212 550,195 600,182 640,160 650,143 700,145 760,138 830,140 835,122 855,130 880,115 910,108 925,95 940,100 1000,115 985,140 962,160 975,160 1010,135 1040,118 1080,103 1150,97 1170,100 1200,95 1210,105 1270,100 1300,97 1340,108 1360,120 1400,135 1418,145 1360,175 1325,205 1330,218 1427,227','485,200 500,193 520,200'],
lines:['1415,143 1350,180 1303,212 1330,222 1420,226','960,160 975,150 995,122','340,190 360,205 410,212','555,205 600,203 620,207 600,210','130,177 140,185 152,180','172,184 185,184 180,190 172,184','100,222 250,220 450,222'],cities:''}
];
const R=n=>n.toFixed(1);
const read=(s,g)=>s?s.split(' ').map(p=>{const [a,b]=p.split(',').map(Number);return [g.x+a/g.sx,g.y+b/g.sy];}):[];
let seed=7;const rnd=()=>{seed=(seed*16807)%2147483647;return seed/2147483647-.5;};
/* Splits each coast segment and shifts the new points sideways, so that shores look eroded. */
const coast=p=>{let d='';p.forEach((a,i)=>{const b=p[(i+1)%p.length],dx=b[0]-a[0],dy=b[1]-a[1],L=Math.hypot(dx,dy),n=Math.max(1,Math.round(L/2.5));
  d+=(i?'L':'M')+R(a[0])+' '+R(a[1]);
  if(L<80)for(let k=1;k<n;k++){const t=k/n,j=rnd()*1.8;d+='L'+R(a[0]+dx*t-dy/L*j)+' '+R(a[1]+dy*t+dx/L*j);}});return d+'Z';};
const smooth=p=>{let d='M'+R(p[0][0])+' '+R(p[0][1]);for(let i=0;i<p.length-1;i++){const a=p[i-1]||p[i],b=p[i],c=p[i+1],e=p[i+2]||c;
  d+='C'+[b[0]+(c[0]-a[0])/7,b[1]+(c[1]-a[1])/7,c[0]-(e[0]-b[0])/7,c[1]-(e[1]-b[1])/7,c[0],c[1]].map(R).join(' ');}return d;};
const globe=()=>{const r=[],l=[];for(let i=0;i<=60;i++){const y=-388.5+777*i/60,b=494-12*Math.pow(Math.abs(y)/388.5,6),x=798.5*Math.sqrt(1-y*y/b/b);r.push(R(1108+x)+' '+R(568+y));l.unshift(R(1108-x)+' '+R(568+y));}return 'M'+r.concat(l).join('L')+'Z';};

define('world-map',()=>{
  let land='',water='',lines='',dots='';
  for(const g of SHEETS){g.land.forEach(s=>land+=coast(read(s,g)));(g.water||[]).forEach(s=>water+=coast(read(s,g)));g.lines.forEach(s=>lines+=smooth(read(s,g)));
    read(g.cities,g).forEach(c=>dots+=`<circle cx="${R(c[0])}" cy="${R(c[1])}" r="2"/>`);}
  return css(':host{display:block;position:relative;background:#fff;overflow:hidden}svg{display:block;width:100%;height:100%}')+
  `<svg viewBox="302 87 1611 962" role="img" aria-label="World map"><path d="${globe()}" fill="#ccc" stroke="#6e6e6e"/>
  <path d="${land}" fill="#e1e1e1"/><path d="${water}" fill="#ccc"/><path d="${lines}" fill="none" stroke="#ccc" stroke-width="1"/>
  <path d="M634 956.500H1582" stroke="#b0b0b0"/>
  <g fill="#6e6e6e">${dots}</g></svg>`;});
</script>
</body>
</html>
